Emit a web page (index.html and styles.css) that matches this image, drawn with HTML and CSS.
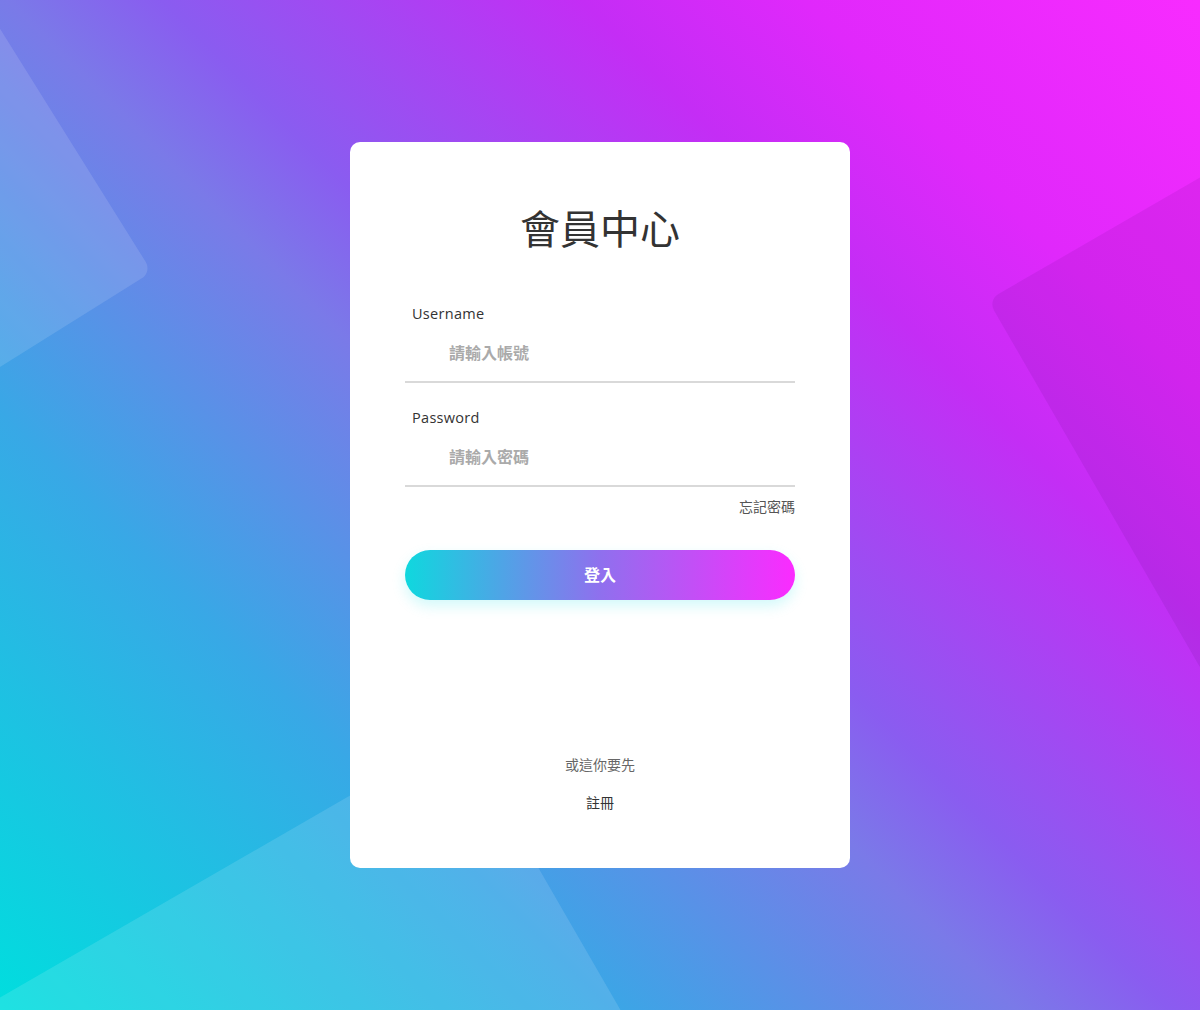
FILE: index.html
```html
<!DOCTYPE html>
<html lang="zh-Hant">
<head>
<meta charset="utf-8">
<title>會員中心</title>
<link rel="stylesheet" href="styles.css">
</head>
<body>
<div class="page">
  <svg class="bg-shapes" width="1200" height="1010" viewBox="0 0 1200 1010" aria-hidden="true">
    <rect class="shape-light" x="0" y="0" width="900" height="900" rx="12" transform="translate(152,272) rotate(148)"></rect>
    <rect class="shape-dark" x="0" y="0" width="900" height="900" rx="12" transform="translate(988,300) rotate(-30)"></rect>
    <rect class="shape-light" x="0" y="0" width="900" height="900" rx="12" transform="translate(460,732) rotate(60)"></rect>
  </svg>

  <form class="card">
    <h1 class="title">會員中心</h1>

    <label class="field-label" for="user">Username</label>
    <input class="field-input" id="user" type="text" placeholder="請輸入帳號">

    <label class="field-label field-label-second" for="pass">Password</label>
    <input class="field-input" id="pass" type="password" placeholder="請輸入密碼">

    <div class="forgot-row"><a class="forgot" href="#">忘記密碼</a></div>

    <button class="login-btn" type="button">登入</button>

    <p class="alt-text">或這你要先</p>
    <a class="register" href="#">註冊</a>
  </form>
</div>
</body>
</html>
```

FILE: styles.css
```css
html, body {
  margin: 0;
  padding: 0;
}

body {
  font-family: "Open Sans", "Noto Sans CJK TC", sans-serif;
}

.page {
  position: relative;
  width: 100%;
  height: 100vh;
  min-height: 1010px;
  overflow: hidden;
  display: flex;
  align-items: center;
  justify-content: center;
  background: linear-gradient(45deg,
    #00dede 0%,
    #38a8e6 27%,
    #7a7ae8 46%,
    #8a5cf0 53%,
    #c42df5 72%,
    #e028fb 82%,
    #f82bff 100%);
}

.bg-shapes {
  position: absolute;
  left: 0;
  top: 0;
  z-index: 0;
}

.shape-light {
  fill: rgba(255, 255, 255, 0.12);
}

.shape-dark {
  fill: rgba(40, 0, 80, 0.08);
}

.card {
  position: relative;
  z-index: 1;
  box-sizing: border-box;
  width: 500px;
  padding: 61px 55px 56px;
  background: #fff;
  border-radius: 10px;
  display: flex;
  flex-direction: column;
}

.title {
  margin: 0 0 53px;
  font-family: "Noto Sans CJK TC", sans-serif;
  font-size: 40px;
  line-height: 48px;
  font-weight: 400;
  color: #333;
  text-align: center;
}

.field-label {
  display: block;
  padding-left: 7px;
  font-family: "Open Sans", sans-serif;
  font-size: 14.5px;
  letter-spacing: 0.3px;
  line-height: 20px;
  color: #333;
}

.field-label-second {
  margin-top: 25px;
}

.field-input {
  box-sizing: border-box;
  width: 100%;
  height: 59px;
  margin: 0;
  padding: 0 0 2px 44px;
  border: none;
  border-bottom: 2px solid #d9d9d9;
  outline: none;
  background: transparent;
  font-family: "Noto Sans CJK TC", sans-serif;
  font-size: 16px;
  color: #333;
}

.field-input::placeholder {
  color: #aaaaaa;
  font-weight: 700;
}

.forgot-row {
  margin-top: 9px;
  display: flex;
  justify-content: flex-end;
}

.forgot {
  font-family: "Noto Sans CJK TC", sans-serif;
  font-size: 14px;
  line-height: 20px;
  color: #555;
  text-decoration: none;
}

.login-btn {
  margin-top: 34px;
  height: 50px;
  width: 100%;
  padding: 0 0 2px;
  border: none;
  border-radius: 25px;
  background: linear-gradient(to right, #0fd8de 0%, #8f70ee 50%, #fb2bff 100%);
  box-shadow: 0 6px 14px rgba(0, 220, 230, 0.18);
  color: #fff;
  font-family: "Noto Sans CJK TC", sans-serif;
  font-size: 16px;
  font-weight: 700;
  cursor: pointer;
}

.alt-text {
  margin: 154px 0 0;
  text-align: center;
  font-family: "Noto Sans CJK TC", sans-serif;
  font-size: 14px;
  line-height: 20px;
  color: #666;
}

.register {
  margin-top: 18px;
  text-align: center;
  font-family: "Noto Sans CJK TC", sans-serif;
  font-size: 14px;
  line-height: 20px;
  color: #333;
  text-decoration: none;
}
```
